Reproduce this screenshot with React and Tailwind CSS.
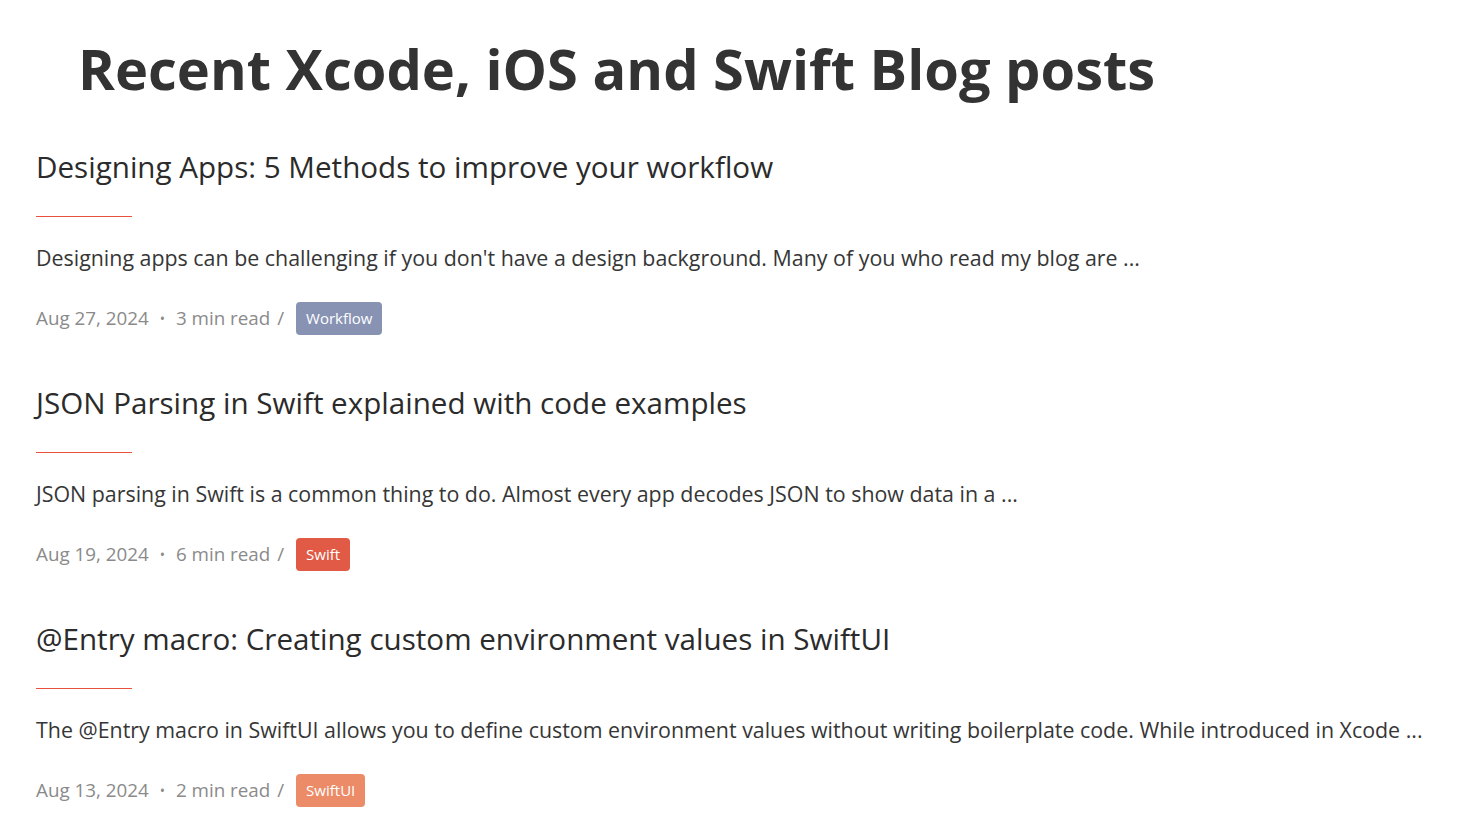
const posts = [
  {
    title: 'Designing Apps: 5 Methods to improve your workflow',
    excerpt:
      "Designing apps can be challenging if you don't have a design background. Many of you who read my blog are ...",
    date: 'Aug 27, 2024',
    read: '3 min read',
    tag: 'Workflow',
    tagClass: 'bg-[#8893b4]',
  },
  {
    title: 'JSON Parsing in Swift explained with code examples',
    excerpt:
      'JSON parsing in Swift is a common thing to do. Almost every app decodes JSON to show data in a ...',
    date: 'Aug 19, 2024',
    read: '6 min read',
    tag: 'Swift',
    tagClass: 'bg-[#e05a45]',
  },
  {
    title: '@Entry macro: Creating custom environment values in SwiftUI',
    excerpt:
      'The @Entry macro in SwiftUI allows you to define custom environment values without writing boilerplate code. While introduced in Xcode ...',
    date: 'Aug 13, 2024',
    read: '2 min read',
    tag: 'SwiftUI',
    tagClass: 'bg-[#ec8b67]',
  },
];

const PostItem = ({ post }) => (
  <article className="mb-[48px]">
    <h2 className="text-[29.6px] leading-[40px] text-[#2b2b2b]">{post.title}</h2>
    <div className="mt-[29px] w-[96px] h-px bg-[#e8513c]" />
    <p className="mt-[25px] text-[21.4px] leading-[32px] text-[#363636] whitespace-nowrap">{post.excerpt}</p>
    <div className="mt-[28px] flex items-center text-[18.8px] text-[#8a8a8a]">
      <span>{post.date}</span>
      <span className="mx-[11px] text-[14px]">•</span>
      <span>{post.read}</span>
      <span className="ml-[7px] mr-[12px]">/</span>
      <span className={`${post.tagClass} text-white text-[15px] leading-[33px] px-[10px] rounded-[4px]`}>
        {post.tag}
      </span>
    </div>
  </article>
);

export default function App() {
  return (
    <div className="min-h-screen bg-white px-[36px] font-['Open_Sans',sans-serif]">
      <h1 className="pl-[42px] pt-[30px] text-[56px] leading-[76px] font-bold text-[#333]">
        Recent Xcode, iOS and Swift Blog posts
      </h1>
      <div className="mt-[41px]">
        {posts.map((post) => (
          <PostItem key={post.title} post={post} />
        ))}
      </div>
    </div>
  );
}
